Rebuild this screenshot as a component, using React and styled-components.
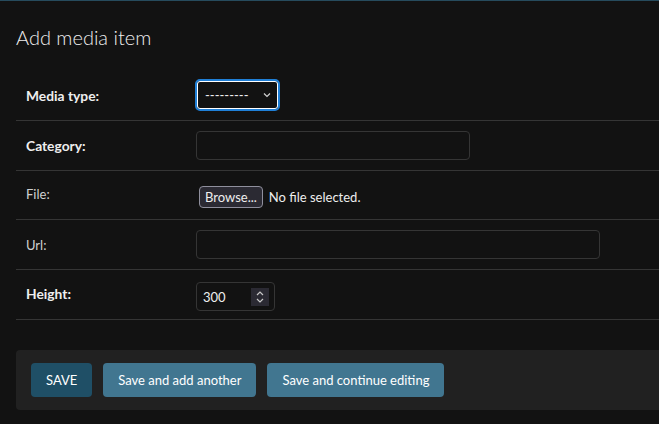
import React from "react";
import styled, { createGlobalStyle } from "styled-components";

const GlobalStyle = createGlobalStyle`
  html, body {
    margin: 0;
    padding: 0;
    background: #121212;
  }
  body {
    font-family: Lato, "Noto Sans", "Liberation Sans", sans-serif;
    color: #eeeeee;
    font-size: 14px;
  }
`;

const Page = styled.div`
  border-top: 1px solid #264b5d;
  min-height: 423px;
  background: #121212;
  padding: 0 0 0 16px;
  overflow: hidden;
`;

const Title = styled.h1`
  margin: 0;
  padding: 24px 0 22px;
  font-size: 20px;
  font-weight: 300;
  color: #eeeeee;
  line-height: 24px;
`;

const Fieldset = styled.div`
  display: flex;
  flex-direction: column;
`;

const Row = styled.div`
  display: flex;
  align-items: center;
  height: ${(p) => p.h || 49}px;
  border-bottom: 1px solid #353535;
  padding-left: 10px;
`;

const Label = styled.label`
  width: 170px;
  flex: none;
  font-size: ${(p) => (p.required ? 13.8 : 13)}px;
  font-weight: ${(p) => (p.required ? 700 : 400)};
  color: ${(p) => (p.required ? "#eeeeee" : "#d0d0d0")};
  margin-top: ${(p) => p.shift || 0}px;
`;

const SelectBox = styled.div`
  display: flex;
  align-items: center;
  justify-content: space-between;
  box-sizing: border-box;
  width: 85px;
  height: 32px;
  margin-left: -1px;
  margin-top: -2px;
  padding: 0 6px 0 8px;
  border: 2px solid #1f7fd6;
  border-radius: 5px;
  box-shadow: inset 0 0 0 1px #ffffff;
  font-size: 13px;
  color: #eeeeee;
`;

const TextInput = styled.div`
  box-sizing: border-box;
  width: ${(p) => p.w}px;
  height: 29px;
  border: 1px solid #353535;
  border-radius: 4px;
  background: #121212;
`;

const FileWrap = styled.div`
  display: flex;
  align-items: center;
  gap: 6px;
  padding-left: 3px;
  margin-top: 4px;
  font-size: 13px;
  color: #eeeeee;
`;

const BrowseButton = styled.button`
  font-family: inherit;
  font-size: 13px;
  color: #eeeeee;
  background: #2b2a33;
  border: 1px solid #8f8f9d;
  border-radius: 4px;
  height: 22px;
  padding: 0 5px;
`;

const NumberInput = styled.div`
  display: flex;
  align-items: center;
  justify-content: space-between;
  box-sizing: border-box;
  width: 79px;
  height: 29px;
  margin-top: 4px;
  padding: 0 5px 0 6px;
  border: 1px solid #353535;
  border-radius: 4px;
  font-size: 13px;
  color: #eeeeee;
`;

const Spinner = styled.div`
  display: flex;
  align-items: center;
  justify-content: center;
  width: 18px;
  height: 18px;
  background: #2b2a33;
`;

const SubmitRow = styled.div`
  display: flex;
  gap: 11px;
  margin-top: 30px;
  padding: 13px 15px;
  background: #212121;
  border-radius: 4px 0 0 4px;
`;

const Button = styled.button`
  font-family: inherit;
  font-size: 13px;
  color: #ffffff;
  background: ${(p) => (p.primary ? "#1f4f66" : "#417690")};
  border: none;
  border-radius: 4px;
  height: 34px;
  padding: 0 15px;
  white-space: nowrap;
`;

const Chevron = () => (
  <svg width="10" height="10" viewBox="0 0 10 10" fill="none">
    <path d="M2 3.5 L5 6.5 L8 3.5" stroke="#d0d0d0" strokeWidth="1.2" />
  </svg>
);

const SpinIcon = () => (
  <svg width="10" height="14" viewBox="0 0 10 14" fill="none">
    <path d="M2 5 L5 2 L8 5 M2 9 L5 12 L8 9" stroke="#c8c8c8" strokeWidth="1.2" />
  </svg>
);

const App = () => (
  <>
    <GlobalStyle />
    <Page>
      <Title>Add media item</Title>
      <Fieldset>
        <Row h={49}>
          <Label required>Media type:</Label>
          <SelectBox>
            <span>---------</span>
            <Chevron />
          </SelectBox>
        </Row>
        <Row>
          <Label required>Category:</Label>
          <TextInput w={274} />
        </Row>
        <Row h={48}>
          <Label shift={-3}>File:</Label>
          <FileWrap>
            <BrowseButton>Browse...</BrowseButton>
            <span>No file selected.</span>
          </FileWrap>
        </Row>
        <Row>
          <Label>Url:</Label>
          <TextInput w={404} />
        </Row>
        <Row>
          <Label required shift={-3}>Height:</Label>
          <NumberInput>
            <span>300</span>
            <Spinner>
              <SpinIcon />
            </Spinner>
          </NumberInput>
        </Row>
      </Fieldset>
      <SubmitRow>
        <Button primary>SAVE</Button>
        <Button>Save and add another</Button>
        <Button>Save and continue editing</Button>
      </SubmitRow>
    </Page>
  </>
);

export default App;
